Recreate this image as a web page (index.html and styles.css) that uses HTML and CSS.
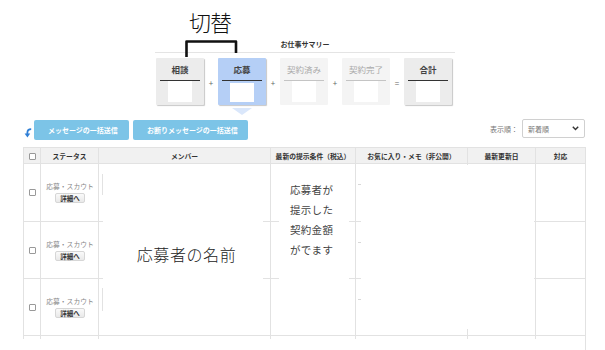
FILE: index.html
```html
<!DOCTYPE html>
<html lang="ja">
<head>
<meta charset="utf-8">
<title>お仕事サマリー</title>
<link rel="stylesheet" href="styles.css">
</head>
<body>
<div class="page">
  <div class="note-title">切替</div>
  <svg class="note-bracket" width="605" height="60" viewBox="0 0 605 60"><path d="M186.5 57 V41.5 H236 V53" fill="none" stroke="#111" stroke-width="2.6" stroke-linejoin="round"/></svg>

  <section class="summary">
    <div class="summary-title">お仕事サマリー</div>
    <div class="steps">
      <div class="step"><div class="step-label">相談</div><div class="step-value"></div></div>
      <div class="op">+</div>
      <div class="step step-active"><div class="step-label">応募</div><div class="step-value"></div></div>
      <div class="op">+</div>
      <div class="step step-off"><div class="step-label">契約済み</div><div class="step-value"></div></div>
      <div class="op">+</div>
      <div class="step step-off"><div class="step-label">契約完了</div><div class="step-value"></div></div>
      <div class="op">=</div>
      <div class="step"><div class="step-label">合計</div><div class="step-value"></div></div>
    </div>
  </section>

  <div class="toolbar">
    <svg class="arrow-icon" width="8" height="10" viewBox="0 0 8 10"><path d="M7.2 1.2 C5 1.2 3.4 2.2 3.4 4.6 V6" fill="none" stroke="#2f7fd6" stroke-width="1.8"/><path d="M0.6 5.4 H6.2 L3.4 9.4 Z" fill="#2f7fd6"/></svg>
    <button class="btn">メッセージの一括送信</button>
    <button class="btn btn-wide">お断りメッセージの一括送信</button>
    <div class="sort">
      <span class="sort-label">表示順：</span>
      <div class="select"><span>新着順</span><svg width="7" height="5" viewBox="0 0 7 5"><path d="M0.8 0.8 L3.5 3.6 L6.2 0.8" fill="none" stroke="#333" stroke-width="1.4"/></svg></div>
    </div>
  </div>

  <div class="table-wrap">
    <div class="grid">
      <div class="th c1"><span class="cb"></span></div>
      <div class="th">ステータス</div>
      <div class="th">メンバー</div>
      <div class="th">最新の提示条件（税込）</div>
      <div class="th">お気に入り・メモ（非公開）</div>
      <div class="th">最新更新日</div>
      <div class="th">対応</div>

      <div class="td c1 td-cb"><span class="cb"></span></div>
      <div class="td td-status"><span class="status-text">応募・スカウト</span><span class="detail">詳細へ</span></div>
      <div class="td td-member"><span class="avatar-edge"></span></div>
      <div class="td"></div>
      <div class="td td-fav"><span class="dash"></span></div>
      <div class="td"></div>
      <div class="td"></div>

      <div class="td c1 td-cb"><span class="cb"></span></div>
      <div class="td td-status"><span class="status-text">応募・スカウト</span><span class="detail">詳細へ</span></div>
      <div class="td td-member"></div>
      <div class="td"></div>
      <div class="td td-fav"><span class="dash"></span></div>
      <div class="td"></div>
      <div class="td"></div>

      <div class="td c1 td-cb"><span class="cb"></span></div>
      <div class="td td-status"><span class="status-text">応募・スカウト</span><span class="detail">詳細へ</span></div>
      <div class="td td-member"><span class="avatar-edge avatar-edge-low"></span></div>
      <div class="td"></div>
      <div class="td td-fav"><span class="dash"></span></div>
      <div class="td"></div>
      <div class="td"></div>

      <div class="tail c1"></div><div class="tail"></div><div class="tail"></div><div class="tail"></div><div class="tail"></div><div class="tail"></div><div class="tail tail-long"></div>
    </div>

    <div class="mask mask-member"><span class="mask-name">応募者の名前</span></div>
    <div class="mask mask-price"><p>応募者が</p><p>提示した</p><p>契約金額</p><p>がでます</p></div>
    <div class="mask mask-fav"></div>
  </div>
</div>
</body>
</html>
```

FILE: styles.css
```css
* { box-sizing: border-box; }
html, body { margin: 0; padding: 0; background: #fff; }
body {
  font-family: "Noto Sans CJK JP", "Noto Sans", sans-serif;
  color: #333;
  width: 605px;
  height: 350px;
  overflow: hidden;
}
.page { position: relative; padding-top: 39px; }

.note-title {
  position: absolute;
  left: 189px;
  top: 8px;
  font-size: 22px;
  line-height: 26px;
  font-weight: 300;
  color: #111;
  letter-spacing: -1px;
}
.note-bracket { position: absolute; left: 0; top: 0; }

.summary { margin-left: 155px; width: 300px; }
.summary-title {
  text-align: center;
  font-size: 7px;
  font-weight: 700;
  line-height: 10px;
  height: 14px;
  padding-bottom: 3px;
  border-bottom: 1px solid #e4e4e4;
  color: #333;
}
.steps { display: flex; margin-top: 5px; margin-left: 1px; height: 47px; }
.step {
  position: relative;
  width: 48px;
  height: 47px;
  background: #ececec;
  padding: 0 4px;
  box-shadow: 1px 1px 1px rgba(0,0,0,0.22);
  border-radius: 1px;
}
.step-label {
  height: 23px;
  line-height: 22px;
  text-align: center;
  font-size: 8.5px;
  font-weight: 700;
  color: #444;
  border-bottom: 1px solid #333;
  white-space: nowrap;
}
.step-value {
  width: 24px;
  height: 21px;
  margin: 0 auto;
  background: #fff;
}
.step-active { background: #b5cff6; }
.step-active .step-value { margin-top: 2px; height: 19px; }
.step-active::after {
  content: "";
  position: absolute;
  left: 14px;
  top: 50px;
  border-left: 10px solid transparent;
  border-right: 10px solid transparent;
  border-top: 7px solid #dae7fb;
}
.step-off { background: #f4f4f4; box-shadow: none; }
.step-off .step-label { color: #aaa; font-weight: 400; border-bottom-color: #c4c4c4; }
.op {
  width: 14px;
  height: 47px;
  text-align: center;
  font-size: 8px;
  line-height: 43px;
  padding-top: 3px;
  color: #666;
}

.toolbar {
  display: flex;
  align-items: flex-start;
  margin-top: 14px;
  height: 21px;
  padding: 0 20px 0 24px;
}
.arrow-icon { margin-top: 9px; margin-right: 2px; }
.btn {
  margin-top: 1px;
  height: 20px;
  border: 0;
  border-radius: 2px;
  background: #7cc4e7;
  color: #fff;
  font-family: inherit;
  font-size: 7px;
  font-weight: 700;
  padding: 0 14px;
  width: 95px;
  white-space: nowrap;
}
.btn-wide { width: 115px; margin-left: 4px; }
.sort { margin-left: auto; display: flex; align-items: center; }
.sort-label { font-size: 7px; color: #777; margin-right: 4px; }
.select {
  width: 63px;
  height: 19px;
  border: 1px solid #d0d0d0;
  border-radius: 2px;
  display: flex;
  align-items: center;
  justify-content: space-between;
  padding: 0 5px 0 5px;
  font-size: 7px;
  color: #777;
}

.table-wrap { position: relative; margin-top: 7px; margin-left: 23px; width: 563px; }
.grid {
  display: grid;
  grid-template-columns: 18px 58px 172px 85px 112px 68px 50px;
  grid-template-rows: 17px 58px 57px 57px auto;
  width: 563px;
}
.th, .td { border-right: 1px solid #e2e2e2; border-bottom: 1px solid #e2e2e2; }
.c1 { border-left: 1px solid #e2e2e2; }
.th {
  background: #f1f1f1;
  border-top: 1px solid #e2e2e2;
  font-size: 6.8px;
  font-weight: 700;
  color: #333;
  display: flex;
  align-items: center;
  justify-content: center;
  white-space: nowrap;
  overflow: hidden;
}
.th.c1 { padding-top: 1px; }
.cb {
  display: block;
  width: 7px;
  height: 7px;
  border: 1px solid #999;
  border-radius: 1px;
  background: #fff;
}
.td-cb { display: flex; align-items: center; justify-content: center; }
.td-status {
  display: flex;
  flex-direction: column;
  align-items: center;
  justify-content: center;
  gap: 2px;
  padding-left: 1px;
}
.status-text { font-size: 6.8px; color: #888; line-height: 9px; white-space: nowrap; }
.detail {
  font-size: 6.5px;
  font-weight: 700;
  color: #333;
  line-height: 8px;
  padding: 0 4px;
  border: 1px solid #d6d6d6;
  border-radius: 2px;
  background: linear-gradient(#fafafa, #e9e9e9);
}
.td-member { padding: 10px 0 0 3px; }
.avatar-edge { display: block; width: 6px; height: 21px; border-left: 1px solid #e2e2e2; }
.avatar-edge-low { margin-top: -1px; height: 23px; }
.td-fav { padding: 20px 0 0 2px; }
.dash { display: block; width: 4px; height: 1px; background: #d8d8d8; }

.tail { height: 3px; border-right: 1px solid #e2e2e2; align-self: start; }
.tail-long { height: 20px; }

.mask { position: absolute; background: #fff; }
.mask-member {
  left: 80px; top: 17px; width: 160px; height: 170px;
  display: flex; align-items: center; justify-content: center;
  padding: 10px 0 0 7px;
}
.mask-name { font-size: 16px; font-weight: 300; color: #222; letter-spacing: 0.6px; }
.mask-price {
  left: 256px; top: 17px; width: 70px; height: 170px;
  padding: 16px 0 0 11px;
}
.mask-price p {
  margin: 0;
  font-size: 10.5px;
  line-height: 20px;
  color: #444;
  letter-spacing: 0.3px;
}
.mask-fav { left: 338px; top: 18px; width: 173px; height: 164px; }
```
